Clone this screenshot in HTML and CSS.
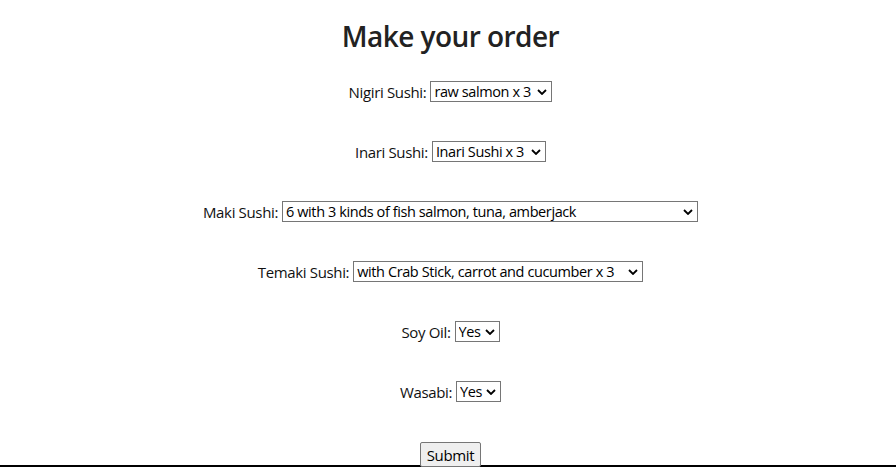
FILE: index.html
```html
<!DOCTYPE html>
<html>
<head>
<meta charset="utf-8">
<link rel="stylesheet" href="styles.css">
</head>
<body>
<main class="page">
  <h1 class="title">Make your order</h1>
  <form class="order">
    <div class="row"><label>Nigiri Sushi:</label><select class="sel sel-nigiri"><option>raw salmon x 3</option></select></div>
    <div class="row"><label>Inari Sushi:</label><select class="sel sel-inari"><option>Inari Sushi x 3</option></select></div>
    <div class="row"><label>Maki Sushi:</label><select class="sel sel-maki"><option>6 with 3 kinds of fish salmon, tuna, amberjack</option></select></div>
    <div class="row"><label>Temaki Sushi:</label><select class="sel sel-temaki"><option>with Crab Stick, carrot and cucumber x 3</option></select></div>
    <div class="row"><label>Soy Oil:</label><select class="sel sel-yes"><option>Yes</option></select></div>
    <div class="row"><label>Wasabi:</label><select class="sel sel-yes"><option>Yes</option></select></div>
    <div class="row row-submit"><button type="button" class="submit">Submit</button></div>
  </form>
</main>
</body>
</html>
```
FILE: styles.css
```css
html, body {
  margin: 0;
  padding: 0;
  background: #fff;
}
body {
  font-family: "Open Sans", "Noto Sans", sans-serif;
  color: #111;
  overflow: hidden;
}
.page {
  height: 465px;
  padding-left: 5px;
  border-bottom: 2px solid #000;
  display: flex;
  flex-direction: column;
  align-items: center;
}
.title {
  margin: 18px 0 0;
  font-size: 28px;
  font-weight: 600;
  line-height: 36px;
  color: #222;
  letter-spacing: -0.55px;
}
.order {
  display: flex;
  flex-direction: column;
  align-items: center;
  margin-top: 27px;
  gap: 39px;
}
.row {
  height: 21px;
  display: flex;
  align-items: center;
  font-size: 15px;
  letter-spacing: -0.35px;
}
.row label {
  margin-right: 4px;
}
.sel {
  -webkit-appearance: none;
  appearance: none;
  height: 21px;
  box-sizing: border-box;
  font-family: "Open Sans", sans-serif;
  font-size: 14.5px;
  letter-spacing: -0.4px;
  line-height: 19px;
  color: #000;
  border: 1px solid #767676;
  border-radius: 0;
  background-color: #fff;
  background-image: url("data:image/svg+xml,%3Csvg xmlns='http://www.w3.org/2000/svg' width='10' height='6' viewBox='0 0 10 6'%3E%3Cpath d='M1 1l4 4 4-4' fill='none' stroke='%23000' stroke-width='1.8'/%3E%3C/svg%3E");
  background-repeat: no-repeat;
  background-position: right 4px center;
  background-size: 10px 6px;
  padding: 0 16px 0 3px;
}
.sel-nigiri { width: 122px; }
.sel-inari { width: 114px; }
.sel-maki { width: 416px; }
.sel-temaki { width: 290px; }
.sel-yes { width: 45px; }
.row-submit {
  height: 25px;
  margin-top: 1px;
}
.submit {
  font-family: "Open Sans", sans-serif;
  font-size: 15px;
  letter-spacing: -0.35px;
  height: 25px;
  padding: 0 6px;
  background: #efefef;
  border: 1px solid #767676;
  border-radius: 2px;
  color: #000;
}
```
